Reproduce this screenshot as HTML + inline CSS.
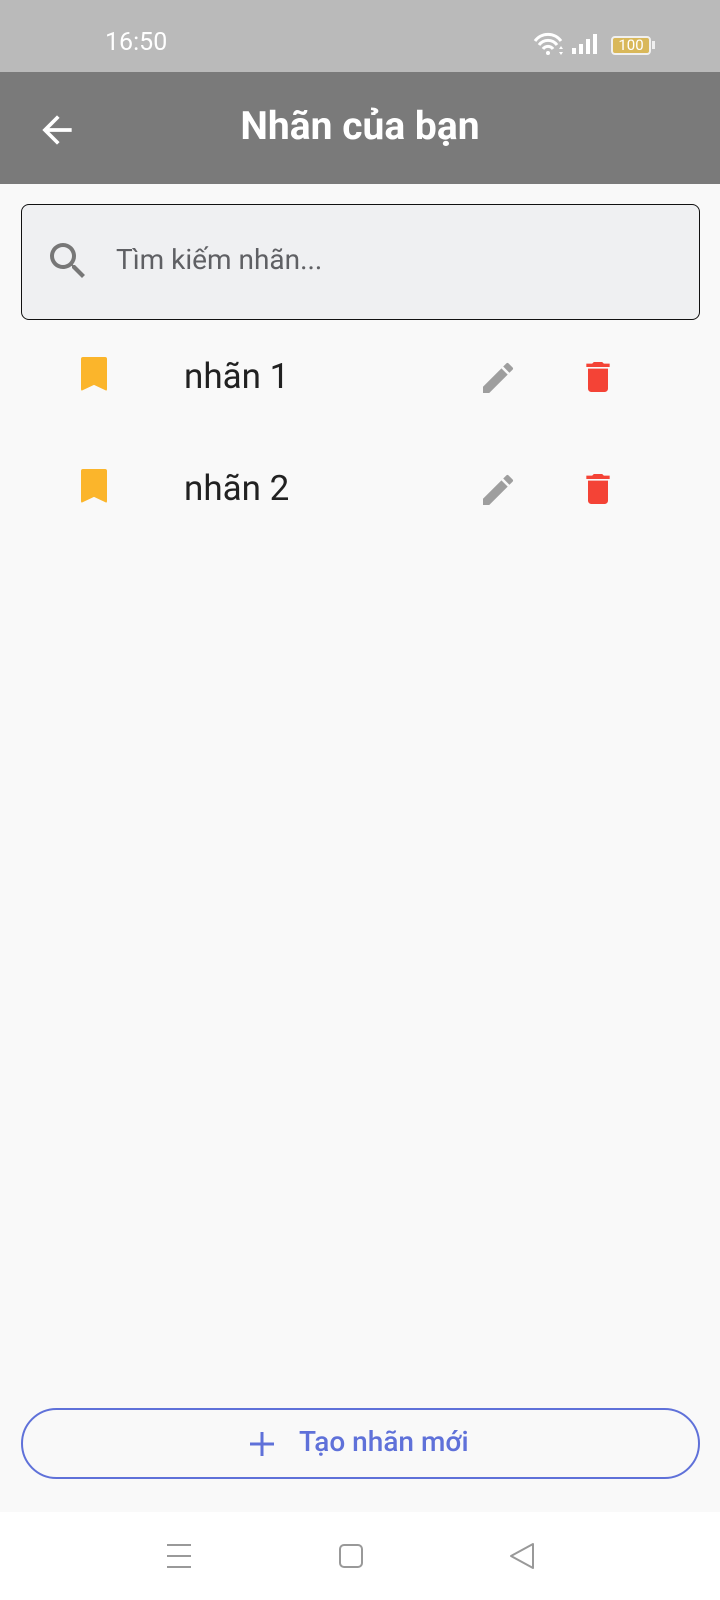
<!DOCTYPE html>
<html><head><meta charset="utf-8"><style>
*{margin:0;padding:0;box-sizing:border-box}
body{width:720px;height:1600px;position:relative;background:#f9f9f9;font-family:"Roboto","Liberation Sans",sans-serif;overflow:hidden}
.abs{position:absolute}
</style></head><body>
<div class="abs" style="left:0;top:0;width:720px;height:72px;background:#bababa"></div>
<div class="abs" style="left:105px;top:28px;font-size:25px;color:#fff;">16:50</div>
<svg class="abs" style="left:533px;top:32px" width="40" height="24" viewBox="0 0 40 24">
<path d="M2 9 A16 16 0 0 1 28 9" stroke="#fff" stroke-width="3" fill="none"/>
<path d="M6 13 A11 11 0 0 1 24 13" stroke="#fff" stroke-width="3" fill="none"/>
<path d="M10 17 A6 6 0 0 1 20 17" stroke="#fff" stroke-width="3" fill="none"/>
<circle cx="15" cy="21" r="2" fill="#fff"/>
<path d="M26 17 l2-3 2 3z M26 20 l2 3 2-3z" fill="#fff"/>
</svg>
<svg class="abs" style="left:571px;top:34px" width="30" height="20" viewBox="0 0 30 20">
<rect x="1" y="14" width="4" height="6" fill="#fff"/><rect x="8" y="10" width="4" height="10" fill="#fff"/><rect x="15" y="5" width="4" height="15" fill="#fff"/><rect x="22" y="0" width="4" height="20" fill="#fff"/>
</svg>
<div class="abs" style="left:611px;top:36px;width:40px;height:19px;border:2px solid #f0f0f0;border-radius:4px;background:#d9b85a;color:#fff;font-size:15px;line-height:15px;text-align:center">100</div>
<div class="abs" style="left:652px;top:41px;width:3px;height:8px;background:#f0f0f0"></div>

<div class="abs" style="left:0;top:72px;width:720px;height:112px;background:#7a7a7a"></div>
<svg class="abs" style="left:35px;top:108px" width="44" height="44" viewBox="0 0 24 24"><path d="M20 11H7.83l5.59-5.59L12 4l-8 8 8 8 1.41-1.41L7.83 13H20v-2z" fill="#fff"/></svg>
<div class="abs" style="left:0;top:103px;width:720px;text-align:center;font-size:39px;font-weight:bold;color:#fff">Nhãn của bạn</div>

<div class="abs" style="left:21px;top:204px;width:679px;height:116px;background:#eff0f2;border:1.5px solid #111;border-radius:8px"></div>
<svg class="abs" style="left:44px;top:237px" width="48" height="48" viewBox="0 0 24 24"><path d="M15.5 14h-.79l-.28-.27A6.47 6.47 0 0 0 16 9.5 6.5 6.5 0 1 0 9.5 16c1.61 0 3.09-.59 4.23-1.57l.27.28v.79l5 4.99L20.49 19l-4.99-5zm-6 0C7.01 14 5 11.99 5 9.5S7.01 5 9.5 5 14 7.01 14 9.5 11.99 14 9.5 14z" fill="#777"/></svg>
<div class="abs" style="left:116px;top:243px;font-size:28px;color:#5f6064">Tìm kiếm nhãn...</div>

<div class="abs" style="left:81px;top:357px;width:26px;height:34px;background:#fbb52b;clip-path:polygon(0 0,100% 0,100% 100%,50% 82%,0 100%);border-radius:2px"></div>
<div class="abs" style="left:184px;top:356px;font-size:35px;color:#212121">nhãn 1</div>
<svg class="abs" style="left:478px;top:358px" width="40" height="40" viewBox="0 0 24 24"><path d="M3 17.25V21h3.75L17.81 9.94l-3.75-3.75L3 17.25zM20.71 7.04a1 1 0 0 0 0-1.41l-2.34-2.34a1 1 0 0 0-1.41 0l-1.83 1.83 3.75 3.75 1.83-1.83z" fill="#9e9e9e"/></svg>
<svg class="abs" style="left:578px;top:357px" width="40" height="40" viewBox="0 0 24 24"><path d="M6 19c0 1.1.9 2 2 2h8c1.1 0 2-.9 2-2V7H6v12zM19 4h-3.5l-1-1h-5l-1 1H5v2h14V4z" fill="#f44336"/></svg>

<div class="abs" style="left:81px;top:469px;width:26px;height:34px;background:#fbb52b;clip-path:polygon(0 0,100% 0,100% 100%,50% 82%,0 100%);border-radius:2px"></div>
<div class="abs" style="left:184px;top:468px;font-size:35px;color:#212121">nhãn 2</div>
<svg class="abs" style="left:478px;top:470px" width="40" height="40" viewBox="0 0 24 24"><path d="M3 17.25V21h3.75L17.81 9.94l-3.75-3.75L3 17.25zM20.71 7.04a1 1 0 0 0 0-1.41l-2.34-2.34a1 1 0 0 0-1.41 0l-1.83 1.83 3.75 3.75 1.83-1.83z" fill="#9e9e9e"/></svg>
<svg class="abs" style="left:578px;top:469px" width="40" height="40" viewBox="0 0 24 24"><path d="M6 19c0 1.1.9 2 2 2h8c1.1 0 2-.9 2-2V7H6v12zM19 4h-3.5l-1-1h-5l-1 1H5v2h14V4z" fill="#f44336"/></svg>

<div class="abs" style="left:21px;top:1408px;width:679px;height:71px;border:2px solid #5f71d9;border-radius:36px"></div>
<svg class="abs" style="left:248px;top:1430px" width="28" height="28" viewBox="0 0 28 28"><path d="M14 2v24M2 14h24" stroke="#5f71d9" stroke-width="3"/></svg>
<div class="abs" style="left:299px;top:1425px;font-size:28px;font-weight:500;color:#5f71d9">Tạo nhãn mới</div>

<div class="abs" style="left:0;top:1512px;width:720px;height:88px;background:#fff"></div>
<svg class="abs" style="left:166px;top:1543px" width="26" height="26" viewBox="0 0 26 26"><path d="M1 2h24M1 13h24M1 24h24" stroke="#999" stroke-width="2"/></svg>
<div class="abs" style="left:339px;top:1544px;width:24px;height:24px;border:2px solid #999;border-radius:5px"></div>
<svg class="abs" style="left:508px;top:1542px" width="28" height="28" viewBox="0 0 28 28"><path d="M25 2 L3 14 L25 26 Z" stroke="#999" stroke-width="2" fill="none" stroke-linejoin="round"/></svg>
</body></html>
